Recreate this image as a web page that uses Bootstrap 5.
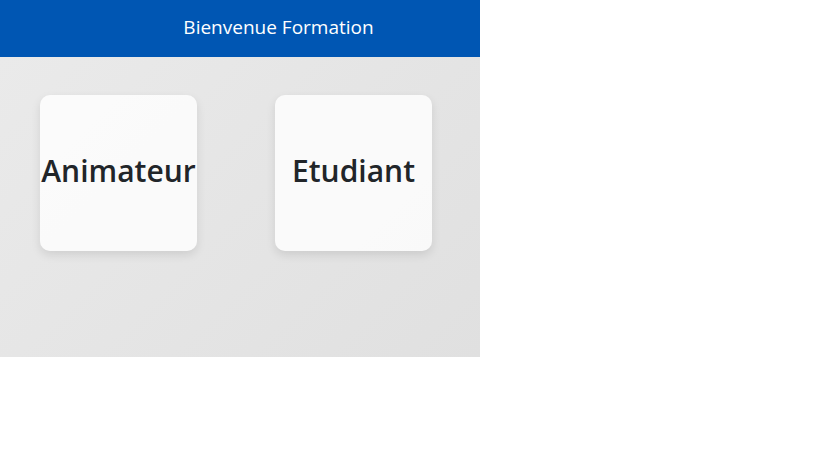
<!DOCTYPE html>
<html lang="fr">
<head>
<meta charset="utf-8">
<meta name="viewport" content="width=device-width, initial-scale=1">
<title>Bienvenue Formation</title>
<link rel="stylesheet" href="https://cdn.jsdelivr.net/npm/bootstrap@5.3.0/dist/css/bootstrap.min.css">
<style>
body { font-family: "Open Sans", "Noto Sans", sans-serif; }
.app-panel { max-width: 480px; }
.app-header { background: #0056b3; padding: 15px 0 17px 77px; font-size: 19px; line-height: 25px; }
.app-main { background: linear-gradient(135deg, #eaeaea, #e0e0e0); padding: 38px 40px 106px; }
.role-list { gap: 78px; }
.role-card { width: 157px; min-height: 156px; padding-bottom: 4px; border-radius: 10px; background: rgba(255,255,255,.8); box-shadow: 0 4px 10px rgba(0,0,0,.1); color: #212529; }
.role-card h2 { font-size: 30px; line-height: 38px; font-weight: 600; }
</style>
</head>
<body>
<div class="app-panel">
  <header class="app-header text-white text-center">Bienvenue Formation</header>
  <main class="app-main">
    <div class="role-list d-flex">
      <a href="#animateur" class="role-card d-flex align-items-center justify-content-center text-decoration-none flex-shrink-0"><h2 class="mb-0">Animateur</h2></a>
      <a href="#etudiant" class="role-card d-flex align-items-center justify-content-center text-decoration-none flex-shrink-0"><h2 class="mb-0">Etudiant</h2></a>
    </div>
  </main>
</div>
<script src="https://cdn.jsdelivr.net/npm/bootstrap@5.3.0/dist/js/bootstrap.bundle.min.js"></script>
</body>
</html>
